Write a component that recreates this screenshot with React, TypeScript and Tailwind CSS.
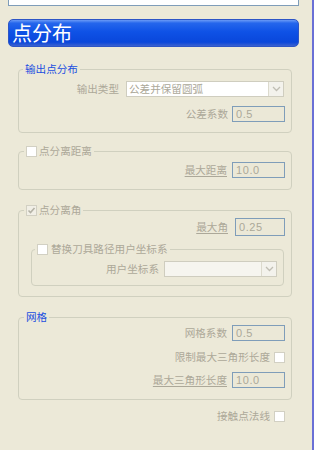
import React from "react";

const labelCls = "text-[#aca899] whitespace-nowrap";
const uLabelCls =
  "text-[#aca899] whitespace-nowrap underline decoration-[#aca899] underline-offset-[2px]";

function Check({ checked }: { checked?: boolean }) {
  return (
    <div
      className={
        "flex h-[11px] w-[11px] shrink-0 items-center justify-center border border-[#d2d0c3] " +
        (checked ? "bg-[#f1efe6]" : "bg-white")
      }
    >
      {checked && (
        <svg width="9" height="9" viewBox="0 0 9 9">
          <path d="M1.5 4.5 L3.5 6.5 L7.5 2" stroke="#b4b2a6" strokeWidth="1.6" fill="none" />
        </svg>
      )}
    </div>
  );
}

function TextBox({ value, h = "h-[16px]", w = "w-[53px]" }: { value: string; h?: string; w?: string }) {
  return (
    <div
      className={`${h} ${w} flex items-center border border-[#7f9db9] bg-[#ebe8d7] px-[3px] font-['Liberation_Sans',sans-serif] text-[11px] tracking-[0.6px] text-[#aca899]`}
    >
      {value}
    </div>
  );
}

function Select({ value, w, bg }: { value: string; w: string; bg: string }) {
  return (
    <div className={`${w} ${bg} flex h-[16px] border border-[#cfcdbf]`}>
      <div className="flex-1 truncate pl-[2px] leading-[14px] text-[#aca899]">{value}</div>
      <div className="flex w-[15px] items-center justify-center border-l border-[#dcdacd] bg-[#f3f2ec]">
        <svg width="9" height="6" viewBox="0 0 9 6">
          <path d="M1 1 L4.5 4.5 L8 1" stroke="#c0beb3" strokeWidth="1.3" fill="none" />
        </svg>
      </div>
    </div>
  );
}

function Group({
  legend,
  className,
  legendCls,
  children,
}: {
  legend: React.ReactNode;
  className: string;
  legendCls: string;
  children: React.ReactNode;
}) {
  return (
    <fieldset className={"rounded-[4px] border border-[#d0d0bf] " + className}>
      <legend className={"h-[16px] leading-[16px] " + legendCls}>{legend}</legend>
      {children}
    </fieldset>
  );
}

export default function App() {
  return (
    <div className="flex h-[450px] w-[314px] overflow-hidden bg-[#ece9d8] font-['Noto_Sans_CJK_SC','Liberation_Sans',sans-serif] text-[10.6px]">
      <div className="flex w-[312px] flex-col pl-[8px]">
        <div className="h-[6px] w-[291px] border-x border-b border-[#7f9db9] bg-white" />

        <div className="mt-[13px] h-[28px] w-[291px] rounded-[5px] border border-[#2d55c6] bg-[linear-gradient(180deg,#6a9af6_0%,#2566ec_12%,#0f52e6_45%,#0a47db_85%,#3b61cf_100%)] pl-[3px] text-[20px] leading-[26px] text-white">
          点分布
        </div>

        {/* 输出点分布 */}
        <Group
          legend="输出点分布"
          legendCls="ml-[4px] px-[2px] text-[#1b4fe0]"
          className="ml-[10px] mt-[14px] w-[274px] pb-[10px] pt-[4px]"
        >
          <div className="flex items-center justify-end gap-[7px] pr-[7px]">
            <span className={labelCls}>输出类型</span>
            <Select value="公差并保留圆弧" w="w-[158px]" bg="bg-white" />
          </div>
          <div className="mt-[9px] flex items-center justify-end gap-[4px] pr-[6px]">
            <span className={labelCls}>公差系数</span>
            <TextBox value="0.5" />
          </div>
        </Group>

        {/* 点分离距离 */}
        <Group
          legend={
            <span className="flex items-center gap-[2px]">
              <Check />
              <span className="text-[#aca899]">点分离距离</span>
            </span>
          }
          legendCls="ml-[5px] px-[2px]"
          className="ml-[10px] mt-[10px] w-[274px] pb-[11px] pt-[3px]"
        >
          <div className="flex items-center justify-end gap-[5px] pr-[6px]">
            <span className={uLabelCls}>最大距离</span>
            <TextBox value="10.0" />
          </div>
        </Group>

        {/* 点分离角 */}
        <Group
          legend={
            <span className="flex items-center gap-[2px]">
              <Check checked />
              <span className="text-[#aca899]">点分离角</span>
            </span>
          }
          legendCls="ml-[5px] px-[2px]"
          className="ml-[10px] mt-[12px] w-[274px] pb-[10px]"
        >
          <div className="flex items-center justify-end gap-[7px] pr-[6px]">
            <span className={uLabelCls}>最大角</span>
            <TextBox value="0.25" h="h-[18px]" w="w-[50px]" />
          </div>
          <Group
            legend={
              <span className="flex items-center gap-[3px]">
                <Check />
                <span className="text-[#aca899]">替换刀具路径用户坐标系</span>
              </span>
            }
            legendCls="ml-[3px] px-[2px]"
            className="ml-[12px] mr-[7px] mt-[5px] pb-[8px] pt-[4px]"
          >
            <div className="flex items-center justify-end gap-[5px] pr-[6px]">
              <span className={labelCls}>用户坐标系</span>
              <Select value="" w="w-[113px]" bg="bg-[#f6f5ef]" />
            </div>
          </Group>
        </Group>

        {/* 网格 */}
        <Group
          legend="网格"
          legendCls="ml-[5px] px-[2px] text-[#1b4fe0]"
          className="ml-[10px] mt-[12px] w-[274px] pb-[11px]"
        >
          <div className="flex items-center justify-end gap-[5px] pr-[6px]">
            <span className={labelCls}>网格系数</span>
            <TextBox value="0.5" />
          </div>
          <div className="mt-[8px] flex h-[16px] items-center justify-end gap-[4px] pr-[6px]">
            <span className={labelCls}>限制最大三角形长度</span>
            <Check />
          </div>
          <div className="mt-[7px] flex items-center justify-end gap-[5px] pr-[6px]">
            <span className={uLabelCls}>最大三角形长度</span>
            <TextBox value="10.0" />
          </div>
        </Group>

        <div className="ml-[10px] mt-[8px] flex h-[16px] w-[274px] items-center justify-end gap-[4px] pr-[7px]">
          <span className={labelCls}>接触点法线</span>
          <Check />
        </div>
      </div>
      <div className="h-full w-[2px] bg-[#6a70d6]" />
    </div>
  );
}
